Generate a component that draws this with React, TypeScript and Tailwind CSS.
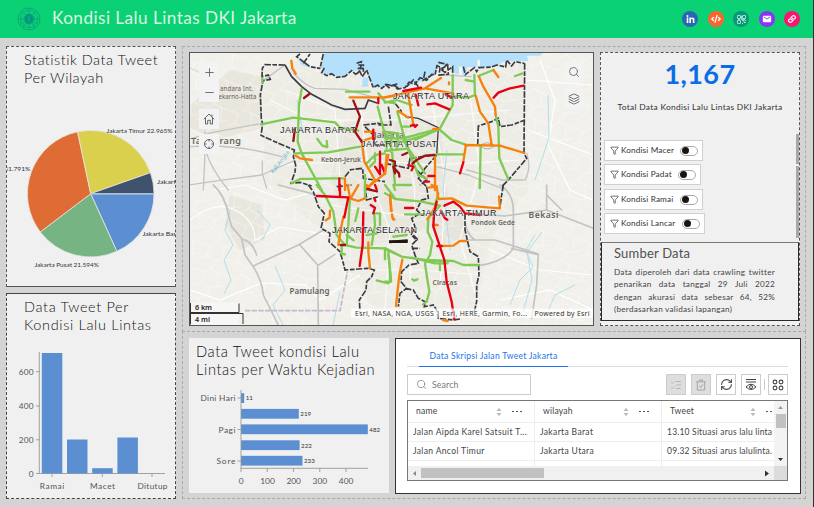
import React from "react";
import { FaLinkedinIn, FaCode, FaLink } from "react-icons/fa";
import { MdEmail } from "react-icons/md";
import { Search, Layers, Plus, Minus, Funnel, RefreshCw, ListChecks } from "lucide-react";

const UI = "Lato, 'Open Sans', sans-serif";

function Logo() {
  return (
    <svg width="24" height="24" viewBox="0 0 24 24" fill="none" stroke="#08a97a" strokeWidth="1">
      <circle cx="12" cy="12" r="11" />
      <circle cx="12" cy="12" r="8.6" strokeWidth=".8" />
      <circle cx="12" cy="12" r="5" fill="#08a07c" />
      <path d="M12 1v22M1.5 12h5M17.5 12h5M3 17l4-2M21 17l-4-2M5 4.5l4 4M19 4.5l-4 4M9 16l-3 5M15 16l3 5" />
      <path d="M9.2 9.2l2.8-1.7 2.8 1.7v5l-2.8 2-2.8-2z" stroke="#07897a" />
    </svg>
  );
}

type Slice = { from: number; to: number; color: string };
const slices: Slice[] = [
  { from: 0, to: 65.6, color: "#5b8fd2" },
  { from: 65.6, to: 142.8, color: "#77b484" },
  { from: 142.8, to: 258, color: "#df6b35" },
  { from: 258, to: 340.6, color: "#dbcf4e" },
  { from: 340.6, to: 360, color: "#3f536c" },
];
function pt(a: number) {
  const r = (a * Math.PI) / 180;
  return `${90.7 + 63.3 * Math.cos(r)} ${193.7 + 63.3 * Math.sin(r)}`;
}

function Pie() {
  return (
    <svg className="block" width="168" height="190" viewBox="7 96 168 190" fontFamily={UI} fontSize="6.5" fill="#333">
      {slices.map((s) => (
        <path key={s.color} d={`M90.7 193.7L${pt(s.from)}A63.3 63.3 0 0 1 ${pt(s.to)}Z`} fill={s.color} stroke="#e6e6e0" strokeWidth=".8" />
      ))}
      <path d="M90.7 193.9H154" stroke="#a9bfd8" strokeWidth="1.2" />
      <text x="106.5" y="132.5" textLength="66" lengthAdjust="spacingAndGlyphs">Jakarta Timur 22.965%</text>
      <text x="-42" y="170.8" textLength="72.5" lengthAdjust="spacingAndGlyphs">Jakarta Selatan 31.791%</text>
      <text x="157" y="183.8" textLength="60" lengthAdjust="spacingAndGlyphs">Jakarta Utara 5.4%</text>
      <text x="142.5" y="235.5" textLength="60" lengthAdjust="spacingAndGlyphs">Jakarta Barat 18.2%</text>
      <text x="34.5" y="266.5" textLength="64.5" lengthAdjust="spacingAndGlyphs">Jakarta Pusat 21.594%</text>
    </svg>
  );
}

function ColumnChart() {
  const bars = [
    { x: 41.8, y: 353 },
    { x: 67, y: 439.5 },
    { x: 92.2, y: 468.2 },
    { x: 117.4, y: 437.5 },
  ];
  return (
    <svg className="block" width="168" height="160" viewBox="7 338 168 160" fontFamily={UI} fontSize="8.3" fill="#555">
      {[["600", 371.7], ["400", 406], ["200", 439.8], ["0", 473.5]].map(([t, y]) => (
        <g key={t}>
          <path d={`M36 ${y}h4`} stroke="#999" strokeWidth=".9" />
          <text x="33.8" y={Number(y) + 3} textAnchor="end" letterSpacing=".2">{t}</text>
        </g>
      ))}
      <path d="M39.3 352V473.5H165M52 474v3M102.3 474v3M152 474v3" stroke="#999" strokeWidth=".9" fill="none" />
      {bars.map((b) => (
        <rect key={b.x} x={b.x} y={b.y} width="20.5" height={473.5 - b.y} fill="#5b8fd2" />
      ))}
      <text x="39.8" y="489.3" textLength="24.5">Ramai</text>
      <text x="90" y="489.3" textLength="25">Macet</text>
      <text x="137.5" y="489.3" textLength="30">Ditutup</text>
    </svg>
  );
}

function BarChart() {
  const rows = [
    { y: 393.2, w: 3.2, v: "11" },
    { y: 408.9, w: 57.8, v: "219" },
    { y: 424.4, w: 126.8, v: "482" },
    { y: 440.3, w: 58.6, v: "222" },
    { y: 455.8, w: 61.5, v: "233" },
  ];
  return (
    <svg className="block" width="199" height="112" viewBox="189 381 199 112" fontFamily={UI} fontSize="8.4" fill="#555">
      {rows.map((r) => (
        <g key={r.y}>
          <rect x="241" y={r.y} width={r.w} height="9.8" fill="#5b8fd2" />
          <text x={242.5 + r.w} y={r.y + 7.2} fontSize="6.2" fill="#333">{r.v}</text>
        </g>
      ))}
      <path d="M241 390V468.3H368M237.5 398h3.5M237.5 429.5h3.5M237.5 461h3.5M241 468v4M267.2 468v4M293.5 468v4M319.8 468v4M346 468v4" fill="none" stroke="#999" strokeWidth=".9" />
      <text x="200.5" y="401" textLength="35">Dini Hari</text>
      <text x="218.5" y="432.5" textLength="17">Pagi</text>
      <text x="216.5" y="464" textLength="19">Sore</text>
      {["0", "100", "200", "300", "400"].map((t, i) => (
        <text key={t} x={241.3 + i * 26.2} y="484" textAnchor="middle">{t}</text>
      ))}
    </svg>
  );
}

const G = "#7fca55";
const O = "#f5820f";
const R = "#e60012";
const D = "#a01018";

/* Each tile of the map is drawn on a grid three times finer than the screen. */
function Tile({ x, y, children }: { x: number; y: number; children: React.ReactNode }) {
  return <g transform={`translate(${x} ${y}) scale(.33333)`}>{children}</g>;
}
function Road({ c, d, w = 7 }: { c: string; d: string; w?: number }) {
  return <path d={d} stroke={c} strokeWidth={w} fill="none" strokeLinejoin="round" strokeLinecap="round" />;
}

function MapDrawing() {
  return (
    <svg className="block" width="403" height="272" viewBox="190 53 403 272" fontFamily="'Noto Sans', sans-serif">
      <defs>
        <pattern id="streets" width="31" height="27" patternUnits="userSpaceOnUse" patternTransform="rotate(12)">
          <path d="M0 6L9 8L14 3L31 7M9 8L7 18L0 22M7 18L18 21L31 17M18 21L16 27M14 3L15 0M22 5L24 19" fill="none" stroke="#fff" strokeWidth=".7" opacity=".6" />
        </pattern>
      </defs>
      <rect x="190" y="53" width="403" height="272" fill="#f1f0ea" />
      <path d="M300 60L525 60L528 190L490 240L475 315L380 320L330 240L265 180L262 70Z" fill="#edece5" />
      <path d="M190 105L230 70L262 76V128L215 140L190 128ZM345 120L440 120L450 220L360 250L330 180ZM230 195L262 205L265 240L240 250L225 225Z" fill="#e9e6de" />
      <path d="M430 218L462 215L466 236L442 246Z" fill="#e6e4dd" />
      <rect x="190" y="53" width="403" height="272" fill="url(#streets)" />
      <g fill="none" stroke="#fff" strokeWidth="1.2">
        <path d="M190 220Q215 200 235 210T255 240L280 227L330 235M190 290L220 300L262 283L305 285L320 300L360 275M215 190L245 185L285 200L320 190M525 80L593 85M528 130L593 155M540 60L555 100L548 145L570 190L593 200M490 250L540 270L593 275M500 300L550 290L593 310" />
        <path d="M285 90L335 110L340 180M360 105L370 180L390 230L385 310M400 110L415 190L410 280M430 90L445 180L440 290M470 95L480 170L460 240L480 310M270 100L310 120L395 120L510 110M285 165L365 160L435 165L520 160M330 205L400 215L500 205M350 270L420 270L480 275" opacity=".8" />
      </g>
      <g fill="none" stroke="#a9dbea" strokeWidth=".9">
        <path d="M222 196L230 212L225 230L233 245L224 260L231 280L224 294M257 210L270 225L262 240M275 266L285 290L273 305L283 325M190 68L205 75M297 100L303 133M280 165L272 172M548 95L549 138L535 180M535 235L526 250L533 267L520 280L510 305M542 232L527 252L532 280L523 312M575 285L555 295L548 311M447 150L443 190L450 250M340 292L333 325" />
      </g>
      <Tile x={185} y={45}>
        <path d="M345 20L335 35L350 60L380 68L418 70L410 84L435 90L480 95L500 78L545 75L565 125L592 130L640 112V20H345Z" fill="#b3e0fb" />
        <path d="M345 20L335 35L375 65L405 70L420 20Z" fill="#f1f1ee" />
        <path d="M535 95L550 100V125H530Z" fill="#b3e0fb" />
      </Tile>
      <Tile x={385} y={45}>
        <path d="M0 20H480L465 32L425 32L430 48L360 48L330 66L245 66V90L200 85V62L160 60L150 88L100 112L60 128L25 125L0 116Z" fill="#b3e0fb" />
        <path d="M277 44h8v20h-8zM222 65h10v25h-10z" fill="#f4f4f1" />
      </Tile>
      <Tile x={185} y={45}>
        <Road c="#c3c3c3" w={4} d="M14 282L80 263L220 237M14 305Q150 295 290 335M14 420L100 407L230 390L325 348M232 348V385L245 430M60 325L55 435M60 260Q45 330 130 435M230 110L300 60M325 85Q360 122 390 130L480 133L580 160" />
      </Tile>
      <Tile x={185} y={185}>
        <Road c="#c3c3c3" w={5} d="M85 0Q120 30 130 90L140 125L170 160L180 210L208 250Q230 285 235 330L280 420M170 163Q200 165 215 210M205 243L340 180L415 135M345 180L398 240L400 420M398 242L450 208M280 0L390 28" />
        <path d="M180 377H465L487 260" fill="none" stroke="#c7b8cc" strokeWidth="5" strokeDasharray="16 4" />
      </Tile>
      <Tile x={385} y={45}>
        <Road c="#c3c3c3" w={4} d="M180 90L260 95M245 375Q320 395 350 405L420 405Q440 370 425 325M155 365L250 390L350 430" />
        <path d="M285 302Q305 285 330 302Q305 322 285 302Z" fill="none" stroke="#b0b0b0" strokeWidth="3" />
      </Tile>
      <Tile x={385} y={185}>
        <Road c="#c3c3c3" w={5} d="M345 0Q385 25 385 75V190Q360 230 280 242M240 85L360 93L485 75L625 130M485 0V75M380 190L455 208M245 165L330 165L460 207L455 300L440 400M485 30L530 75M240 110Q245 150 270 165" />
      </Tile>

      <g fill="#68645f" fontWeight="600">
        <text x="220" y="91" fontSize="6.2" fontWeight="400" textLength="33">andara Int.</text>
        <text x="218.5" y="99" fontSize="6.2" fontWeight="400" textLength="38">ekarno-Hatta</text>
        <text x="191" y="144" fontSize="9" textLength="50">Tangerang</text>
        <text x="321" y="161.5" fontSize="6.7" textLength="40">Kebon-Jeruk</text>
        <text x="289.5" y="293.5" fontSize="8" textLength="40">Pamulang</text>
        <text x="528.5" y="218" fontSize="8.6" textLength="30">Bekasi</text>
        <text x="471" y="224.8" fontSize="6.7" textLength="44">Pondok Gede</text>
        <text x="432.5" y="284.7" fontSize="6.7" textLength="24.5">Ciracas</text>
        <text x="374" y="138" fontSize="8.6" textLength="30">Jakarta</text>
        <text transform="translate(273 174) rotate(-52)" fontSize="5.6" fontWeight="400" fill="#72b8d0">Kali Angke</text>
      </g>

      <g fill="none" stroke="#3b3b43" strokeWidth="5" strokeDasharray="19 5 14 4">
        <Tile x={185} y={45}>
          <path d="M300 60L240 59L232 70L231 95L250 90L256 103L234 107L226 150L229 220L233 237L228 271L270 290L328 315L325 335L332 360L330 380L318 415L345 412L380 423M345 27L335 35L375 65L405 70M355 55L375 27M415 27L405 70M418 69L410 83L425 92L440 86L455 97L480 94L500 77L512 88L525 80L532 95L545 75L555 102L565 128L578 120L590 130L605 118L622 122L640 115M515 55L529 50L526 75L517 85M520 60H535V80M518 70H535M535 240L580 235L600 240M540 245L565 270L568 300L600 300M480 395L497 374L533 370L535 400L600 410" />
          <path d="M300 60L320 95L350 125L380 148L440 180L480 193L540 190L550 165L578 175" strokeDasharray="none" />
        </Tile>
        <Tile x={385} y={45}>
          <path d="M0 117L12 128L25 120L38 132L60 128L72 112L90 118L105 98L125 106L140 88L150 90L156 62L172 70L188 61L190 88L162 90L165 70L180 82L203 65V89M160 52L185 58L170 78M235 65L241 89L268 68L275 80L282 68L320 66L335 60L362 66L365 45L380 63L390 50L418 55M419 55L417 325L425 340L370 405L350 425M100 125L85 105L65 125M28 120L45 135M120 80L115 105L150 85M10 185L18 240L-20 240M30 175L50 200M155 330L120 370L100 400L125 425M278 300L280 243L320 230L340 220L345 245L380 240L420 225M95 375L125 405L105 420M0 355L70 370L75 340L150 330" />
          <path d="M60 215L100 220L160 248L155 330" strokeWidth="4" strokeDasharray="none" />
        </Tile>
        <Tile x={185} y={185}>
          <path d="M370 0L385 20L400 65L418 85L408 130L435 145L432 170L465 200L475 235L480 255L550 250L568 255L560 275L545 290L543 315L523 345L525 380M455 5L500 0M540 0L545 45L580 35" />
        </Tile>
        <Tile x={385} y={185}>
          <path d="M355 0L350 30L345 65M240 85L240 135L248 170L255 200L280 215L282 270L275 300V350L268 380M125 5L130 40L110 45L95 75L105 85L80 100L90 125L78 150L95 165L80 180L90 210L100 235L72 240L50 260L48 290L65 310L45 325L40 365M60 310L85 315L100 340L120 350L118 365L145 360L155 375L160 400L205 405L225 402M85 150L100 165M80 190H105" />
        </Tile>
      </g>

      <Tile x={185} y={45}>
        <Road c={G} d="M350 132L342 180L338 290L350 325L410 435M228 238L325 218L450 232L465 248L520 257M328 325L430 322L525 305M397 282L412 302L427 306L425 288M232 99V111M483 140H553M320 415L345 402L435 400M578 185L600 270M580 145L600 170L630 175M440 400H475M540 390V435M545 355L570 330L600 325M570 325V350L555 365" />
        <Road c={O} d="M319 47L322 70L332 86M494 157H600L630 152M530 285L538 350L570 405L540 435M332 332L345 340L381 345M540 260H565L563 278L540 285M605 330L600 385L545 430M480 400V435" />
        <Road c={D} d="M357 159L373 147M505 167L525 215L510 260L530 290M330 250L325 288" />
        <Road c={R} d="M585 320V388L570 365M463 400V435M565 254V283M580 160V175M590 360L600 385" />
      </Tile>
      <Tile x={385} y={45}>
        <Road c={G} d="M0 173L35 165L80 180M268 90L270 150L250 158L185 152M203 92V180L165 250L55 280H0M165 255L200 285L240 298M152 328H235M280 93L325 75M390 93L413 85M242 105L268 110M332 210L340 245L343 340L370 403M287 302L284 430M37 200L55 265L70 310L0 318M55 280L100 390L125 400M20 310L30 420M70 310L120 385M0 260L40 265L35 310M50 245H75M25 420L30 435M30 420H78M0 290L55 290L120 270L160 255M5 270L5 310M18 265V320M90 285L145 260" />
        <Road c={O} d="M0 157L120 130L168 99M120 130L205 145M70 150L85 240M40 198L70 218M325 75L340 96M282 95L295 125L330 185L332 210M272 152L285 200L310 235L320 300M240 300L345 302L418 324M242 305L235 350M150 335V435M10 330L0 385M192 112V118M145 252H160M130 428L155 425" />
        <Road c={R} d="M55 138L108 128M92 149L100 181M127 178L150 175L193 193M326 158L340 143L375 130L416 122M235 352L225 385M78 242L88 240L90 246L96 240M130 393H148M70 360L85 365L80 376M118 410H132M182 148L200 158" />
        <Road c={D} d="M82 356L95 345L120 332L148 330M15 345L30 350L28 370L42 385L43 395M52 330L66 324M25 365L30 385" />
      </Tile>
      <Tile x={185} y={185}>
        <Road c={G} d="M395 0L420 30L445 80L455 150L480 180L515 188L600 190L630 205M495 40L490 120L485 180M485 150L506 166M520 70L511 108M568 90L570 120L560 180M565 85H585V120M600 190V223M610 200L618 285L610 295L575 286M615 250V288M470 185V207L480 208M600 0L630 40M540 0V40M545 150L575 145" />
        <Road c={O} d="M435 77L434 98L422 106M488 0L495 40L520 48L540 40M475 95L468 130L460 180M520 0L500 35M550 172V200L555 250M615 32L620 78M621 88L624 103M545 0L555 15" />
        <Road c={R} d="M395 33L490 37L478 97M535 82L533 180L524 243M465 0V33M557 60L570 68L565 85M570 0L575 13M568 40L571 48" />
        <Road c={D} d="M547 12L576 19M467 180H480" />
        <path d="M612 170H668" stroke="#1e1610" strokeWidth="8" />
      </Tile>
      <Tile x={385} y={185}>
        <Road c={G} d="M0 25L30 42L110 50L165 62L130 100L128 140L142 170L135 210L120 235L125 270L133 320L125 350L114 358M60 88H118M0 190L50 215L120 225L205 228L235 240H281M10 210L18 290L0 290M80 218L150 235H188M82 283L88 287L97 283M165 232V256M160 25L150 60M285 0V8M25 155L65 150" />
        <Road c={O} d="M140 0L155 5L160 42L200 40L245 62L345 70L342 34M15 30L18 78M22 97L28 104M165 183L205 182L225 168H243M52 224L43 270L33 363M174 405L188 408M155 60L127 103M145 120H158" />
        <Road c={R} d="M178 62L205 50L225 65L240 85L285 90M155 50L147 85L145 125L160 170L178 225L185 290L200 350L208 403M60 69H85M167 77L180 100L187 104M157 183H170" />
        <path d="M12 171L68 167" stroke="#1e1610" strokeWidth="8" />
      </Tile>

      <g fontFamily="'Liberation Sans', sans-serif" fontSize="9" fill="#26262a" stroke="#fff" strokeWidth=".35" paintOrder="stroke">
        <text x="280" y="133" textLength="76">JAKARTA BARAT</text>
        <text x="393" y="99.3" textLength="76">JAKARTA UTARA</text>
        <text x="361" y="147.4" textLength="76">JAKARTA PUSAT</text>
        <text x="332" y="232.7" textLength="85">JAKARTA SELATAN</text>
        <text x="420.5" y="216.2" textLength="76">JAKARTA TIMUR</text>
      </g>
      <rect x="190" y="302.5" width="48.5" height="22.5" fill="#f8f8f7" opacity=".75" />
      <path d="M190.5 303V324.5M239 303.5V312.5H190M190 313.5H243V324" fill="none" stroke="#333" strokeWidth="1" />
      <rect x="351" y="308.5" width="242" height="9.3" fill="#fff" opacity=".72" />
      <g fill="#333" fontSize="7.2">
        <text x="195" y="310.2" textLength="17" fill="#222" fontWeight="600">6 km</text>
        <text x="195" y="322" textLength="15" fill="#222" fontWeight="600">4 mi</text>
        <text x="355" y="315.8" fontSize="6.9" textLength="172">Esri, NASA, NGA, USGS | Esri, HERE, Garmin, Fo...</text>
        <text x="534.5" y="315.8" fontSize="6.9" textLength="55">Powered by Esri</text>
      </g>
    </svg>
  );
}

const mapBtn = "flex h-5 w-5 items-center justify-center bg-[#f3f3f3] text-[#666]";

function MapPanel() {
  return (
    <div className="relative h-[274px] w-[405px] shrink-0 overflow-hidden border border-[#555]">
      <MapDrawing />
      <div className="absolute left-[9px] top-[9px] flex flex-col">
        <span className={mapBtn}><Plus size={13} strokeWidth={1.7} /></span>
        <span className={mapBtn}><Minus size={13} strokeWidth={1.7} /></span>
        <span className={mapBtn + " mt-[7px]"}>
          <svg width="12" height="12" viewBox="0 0 12 12" fill="none" stroke="#666" strokeWidth="1">
            <path d="M.8 6.3L6 1l5.2 5.3M2.5 5v6h2.2V7.3h2.6V11h2.2V5M9 3.7V1.5" />
          </svg>
        </span>
        <span className={mapBtn + " mt-[5px]"}>
          <svg width="12" height="12" viewBox="0 0 12 12" fill="none" stroke="#666" strokeWidth="1">
            <circle cx="6" cy="6" r="4.5" />
            <path d="M6 1v2.5M6 8.5V11M1 6h2.5M8.5 6H11" />
          </svg>
        </span>
      </div>
      <div className="absolute right-[9px] top-[9px] flex flex-col gap-[7px]">
        <span className={mapBtn}><Search size={12} strokeWidth={1.7} /></span>
        <span className={mapBtn}><Layers size={12} strokeWidth={1.9} /></span>
      </div>
    </div>
  );
}

function FilterChip({ label, w, cls, tw }: { label: string; w: string; cls: string; tw: string }) {
  return (
    <div className={"flex h-[21px] items-center border border-[#d0d0d0] bg-white pl-[5px] " + w + " " + cls}>
      <Funnel size={9} strokeWidth={2} className="shrink-0 text-[#444]" />
      <span className={"ml-[2px] whitespace-nowrap text-[8.2px] tracking-[0.15px] text-[#333] " + tw}>{label}</span>
      <span className="ml-[3px] flex h-[10px] w-[18px] items-center rounded-full border border-[#aaa] bg-white pl-px">
        <span className="h-[7px] w-[7px] rounded-full bg-[#151515]" />
      </span>
    </div>
  );
}

function InfoPanel() {
  return (
    <div className="flex h-[274px] w-[200px] shrink-0 flex-col border border-dashed border-[#555] bg-[#f0f0f0]">
      <div className="mt-[4px] h-[34px] text-center text-[27px] font-bold leading-[34px] tracking-[0.4px] text-[#0a6de8]">1,167</div>
      <div className="mt-[10px] h-[12px] whitespace-nowrap text-center text-[8.4px] leading-[12px] tracking-[0.31px] text-[#333]">Total Data Kondisi Lalu Lintas DKI Jakarta</div>
      <div className="mt-[21px] flex h-[108px] justify-between">
        <div className="ml-[3px] mt-[6px] flex flex-col">
          <FilterChip label="Kondisi Macer" w="w-[99px]" cls="" tw="w-[56px]" />
          <FilterChip label="Kondisi Padat" w="w-[97px]" cls="mt-[3px]" tw="w-[54px]" />
          <FilterChip label="Kondisi Ramai" w="w-[99px]" cls="mt-[4px]" tw="w-[56px]" />
          <FilterChip label="Kondisi Lancar" w="w-[101px]" cls="mt-[3px]" tw="w-[58px]" />
        </div>
        <div className="flex w-[3px] flex-col gap-[2px]">
          <div className="h-[30px] bg-[#a8a8a8]" />
          <div className="h-[72px] bg-[#a8a8a8]" />
        </div>
      </div>
      <div className="h-[79px] border border-[#2b2b2b] border-t-[#777] px-[12px] pt-[3px]">
        <h3 className="text-[13px] leading-[15px] tracking-[0.2px] text-[#505050]">Sumber Data</h3>
        <div className="mt-[5px] w-[161px] text-[8.2px] leading-[12.4px] tracking-[0.25px] text-[#444]">
          {["Data diperoleh dari data crawling twitter", "penarikan data tanggal 29 Juli 2022", "dengan akurasi data sebesar 64, 52%"].map((l) => (
            <div key={l} className="flex justify-between">
              {l.split(" ").map((word, i) => <span key={i}>{word}</span>)}
            </div>
          ))}
          <div>(berdasarkan validasi lapangan)</div>
        </div>
      </div>
    </div>
  );
}

function Cell({ children, head, last }: { children: React.ReactNode; head?: boolean; last?: boolean }) {
  return (
    <div className={"flex shrink-0 items-center overflow-hidden whitespace-nowrap border-b border-[#eee] " + (last ? "w-[112px] tracking-[0.2px] " : "w-[127px] border-r ") + (head ? "h-[22px] pl-[8px]" : "h-[19px] pl-[5px]")}>
      {children}
    </div>
  );
}
function HeadCell({ name, last }: { name: string; last?: boolean }) {
  return (
    <Cell head last={last}>
      <span className="w-[79px] shrink-0 text-[8.6px] tracking-[0.2px]">{name}</span>
      <svg className="shrink-0" width="8" height="10" viewBox="0 0 8 10" fill="#bbb">
        <path d="M1.5 4L4 .8L6.5 4ZM1.5 6L4 9.2L6.5 6Z" />
      </svg>
      <span className="ml-[9px] flex shrink-0 gap-[2.5px]">
        {[0, 1, 2].map((i) => <i key={i} className="h-[1.5px] w-[1.5px] bg-[#555]" />)}
      </span>
    </Cell>
  );
}

const tool = "flex h-[21px] w-5 items-center justify-center border border-[#ccc] ";

function TablePanel() {
  return (
    <div className="flex h-[156px] w-[406px] shrink-0 flex-col border border-[#333] bg-white pl-[11px] text-[#444]">
      <div className="flex h-[28px] w-[381px] border-b border-[#ddd] pl-[12px]">
        <div className="-mb-px h-[28px] w-[149px] whitespace-nowrap border-b border-[#1a76e8] pt-[11px] text-center text-[8.6px] leading-[12px] tracking-[0.26px] text-[#1a76e8]">Data Skripsi Jalan Tweet Jakarta</div>
      </div>
      <div className="mt-[7px] flex h-[21px] w-[381px] items-center">
        <div className="mr-auto flex h-[21px] w-[124px] items-center border border-[#ccc] pl-[8px] text-[8.8px] tracking-[0.1px] text-[#777]">
          <Search size={11} strokeWidth={1.5} /><span className="ml-[5px]">Search</span>
        </div>
        <div className={tool + "bg-[#dedede] text-[#aaa]"}><ListChecks size={12} strokeWidth={1.6} /></div>
        <div className={tool + "ml-[5px] bg-[#dedede]"}>
          <svg width="12" height="12" viewBox="0 0 12 12" fill="none" stroke="#a5a5a5" strokeWidth="1">
            <path d="M1 2.8h10M4.3 2.5V1h3.4v1.5M2.3 3v8h7.4V3M4.2 7l1.4 1.5L8 5.5" />
          </svg>
        </div>
        <div className={tool + "ml-[5px]"}><RefreshCw size={13} strokeWidth={1.9} /></div>
        <div className={tool + "ml-[5px]"}>
          <svg width="12" height="13" viewBox="0 0 12 13" fill="none" stroke="#444" strokeWidth="1">
            <path d="M1 1.5h10M1 4h10M1 9Q6 3.5 11 9Q6 14 1 9Z" />
            <circle cx="6" cy="9" r="1.5" />
          </svg>
        </div>
        <div className="mx-[3px] h-[11px] w-px bg-[#ccc]" />
        <div className={tool}>
          <svg width="12" height="12" viewBox="0 0 12 12" fill="none" stroke="#444" strokeWidth="1.1">
            <circle cx="3" cy="3" r="1.9" /><circle cx="9" cy="3" r="1.9" /><circle cx="3" cy="9" r="1.9" /><circle cx="9" cy="9" r="1.9" />
          </svg>
        </div>
      </div>
      <div className="mt-[5px] flex h-[81px] w-[381px] flex-col border border-[#777]">
        <div className="flex h-[65px]">
          <div className="w-[366px] overflow-hidden text-[8.5px] tracking-[0.36px]">
            <div className="flex"><HeadCell name="name" /><HeadCell name="wilayah" /><HeadCell name="Tweet" last /></div>
            <div className="flex"><Cell>Jalan Aipda Karel Satsuit T...</Cell><Cell>Jakarta Barat</Cell><Cell last>13.10 Situasi arus lalu linta</Cell></div>
            <div className="flex"><Cell>Jalan Ancol Timur</Cell><Cell>Jakarta Utara</Cell><Cell last>09.32 Situasi arus lalulinta.</Cell></div>
            <div className="flex"><Cell> </Cell><Cell> </Cell><Cell last> </Cell></div>
          </div>
          <div className="flex w-[13px] flex-col items-center bg-[#f3f3f3]">
            <svg width="7" height="13" viewBox="0 0 7 13"><path d="M1 8L3.5 5L6 8Z" fill="#999" /></svg>
            <div className="h-[14px] w-[10px] bg-[#c1c1c1]" />
            <svg className="mt-auto" width="7" height="13" viewBox="0 0 7 13"><path d="M1 5L3.5 8L6 5Z" fill="#333" /></svg>
          </div>
        </div>
        <div className="flex h-[14px] items-center bg-[#f0f0f0]">
          <svg width="13" height="13" viewBox="0 0 13 13"><path d="M8 4L5 6.5L8 9Z" fill="#888" /></svg>
          <div className="h-[10px] w-[123px] bg-[#c1c1c1]" />
          <svg className="ml-auto mr-px" width="13" height="13" viewBox="0 0 13 13"><path d="M5 3.5L9 6.5L5 9.5Z" fill="#333" /></svg>
          <div className="h-[14px] w-[13px] bg-[#dcdcdc]" />
        </div>
      </div>
    </div>
  );
}

function QrGlyph() {
  return (
    <svg width="9" height="9" viewBox="0 0 9 9" fill="none" stroke="#9fdccb" strokeWidth="1">
      <path d="M.5 .5h3v3h-3zM5.5 .5h3v3h-3zM.5 5.5h3v3h-3zM5 5.5h2v2h2M5 8.5h1M8.5 5v1M4.5 1v3.5H8M1 4.5h2" />
    </svg>
  );
}

export default function App() {
  const dot = "flex h-[16px] w-[16px] items-center justify-center rounded-full ";
  return (
    <div className="flex h-[507px] w-[814px] flex-col overflow-hidden border-r border-[#333] bg-[#d4d4d4] font-[Lato,'Open_Sans',sans-serif]">
      <header className="flex h-[38px] shrink-0 items-center bg-[#0bd175] pl-[17px] pr-[13px]">
        <Logo />
        <h1 className="ml-[11px] mr-auto whitespace-nowrap pb-[2px] text-[17.2px] leading-[22px] tracking-[0.44px] text-[#daf5e0]">Kondisi Lalu Lintas DKI Jakarta</h1>
        <div className="flex gap-[9.5px] text-white">
          <span className={dot + "bg-[#2867b2]"}><FaLinkedinIn size={9} /></span>
          <span className={dot + "bg-[#fb642c]"}><FaCode size={10} /></span>
          <span className={dot + "bg-[#07977b]"}><QrGlyph /></span>
          <span className={dot + "bg-[#8a34f5]"}><MdEmail size={10} /></span>
          <span className={dot + "bg-[#fb1470]"}><FaLink size={8} /></span>
        </div>
      </header>
      <main className="flex pl-[6px] pt-[8px]">
        <div className="flex w-[170px] shrink-0 flex-col gap-[6px]">
          <section className="flex h-[241px] flex-col justify-between overflow-hidden border border-dashed border-[#555] bg-[#f0f0f0] [border-bottom-style:solid]">
            <h2 className="whitespace-nowrap pl-[17px] pt-[4px] text-[14.5px] font-light leading-[18px] tracking-[0.5px] text-[#111]">Statistik Data Tweet<br />Per Wilayah</h2>
            <Pie />
          </section>
          <section className="flex h-[206px] flex-col justify-between overflow-hidden border border-dashed border-[#444] bg-[#f0f0f0] [border-top-style:solid]">
            <h2 className="whitespace-nowrap pl-[17px] pt-[4px] text-[14.5px] font-light leading-[18px] tracking-[0.65px] text-[#111]">Data Tweet Per<br />Kondisi Lalu Lintas</h2>
            <ColumnChart />
          </section>
        </div>
        <div className="ml-[6px] flex w-[624px] flex-col">
          <section className="flex h-[286px] gap-[6px] border border-dashed border-[#aaa] pl-[6px] pt-[5px]">
            <MapPanel />
            <InfoPanel />
          </section>
          <section className="-mt-px flex h-[168px] gap-[6px] border border-dashed border-[#aaa] pl-[6px] pt-[6px]">
            <div className="flex h-[155px] w-[200px] shrink-0 flex-col justify-between bg-[#f0f0f0]">
              <h2 className="whitespace-nowrap pl-[7px] pt-[4px] text-[14.7px] font-light leading-[18px] tracking-[0.6px] text-[#111]">Data Tweet kondisi Lalu<br />Lintas per Waktu Kejadian</h2>
              <BarChart />
            </div>
            <TablePanel />
          </section>
        </div>
      </main>
    </div>
  );
}
